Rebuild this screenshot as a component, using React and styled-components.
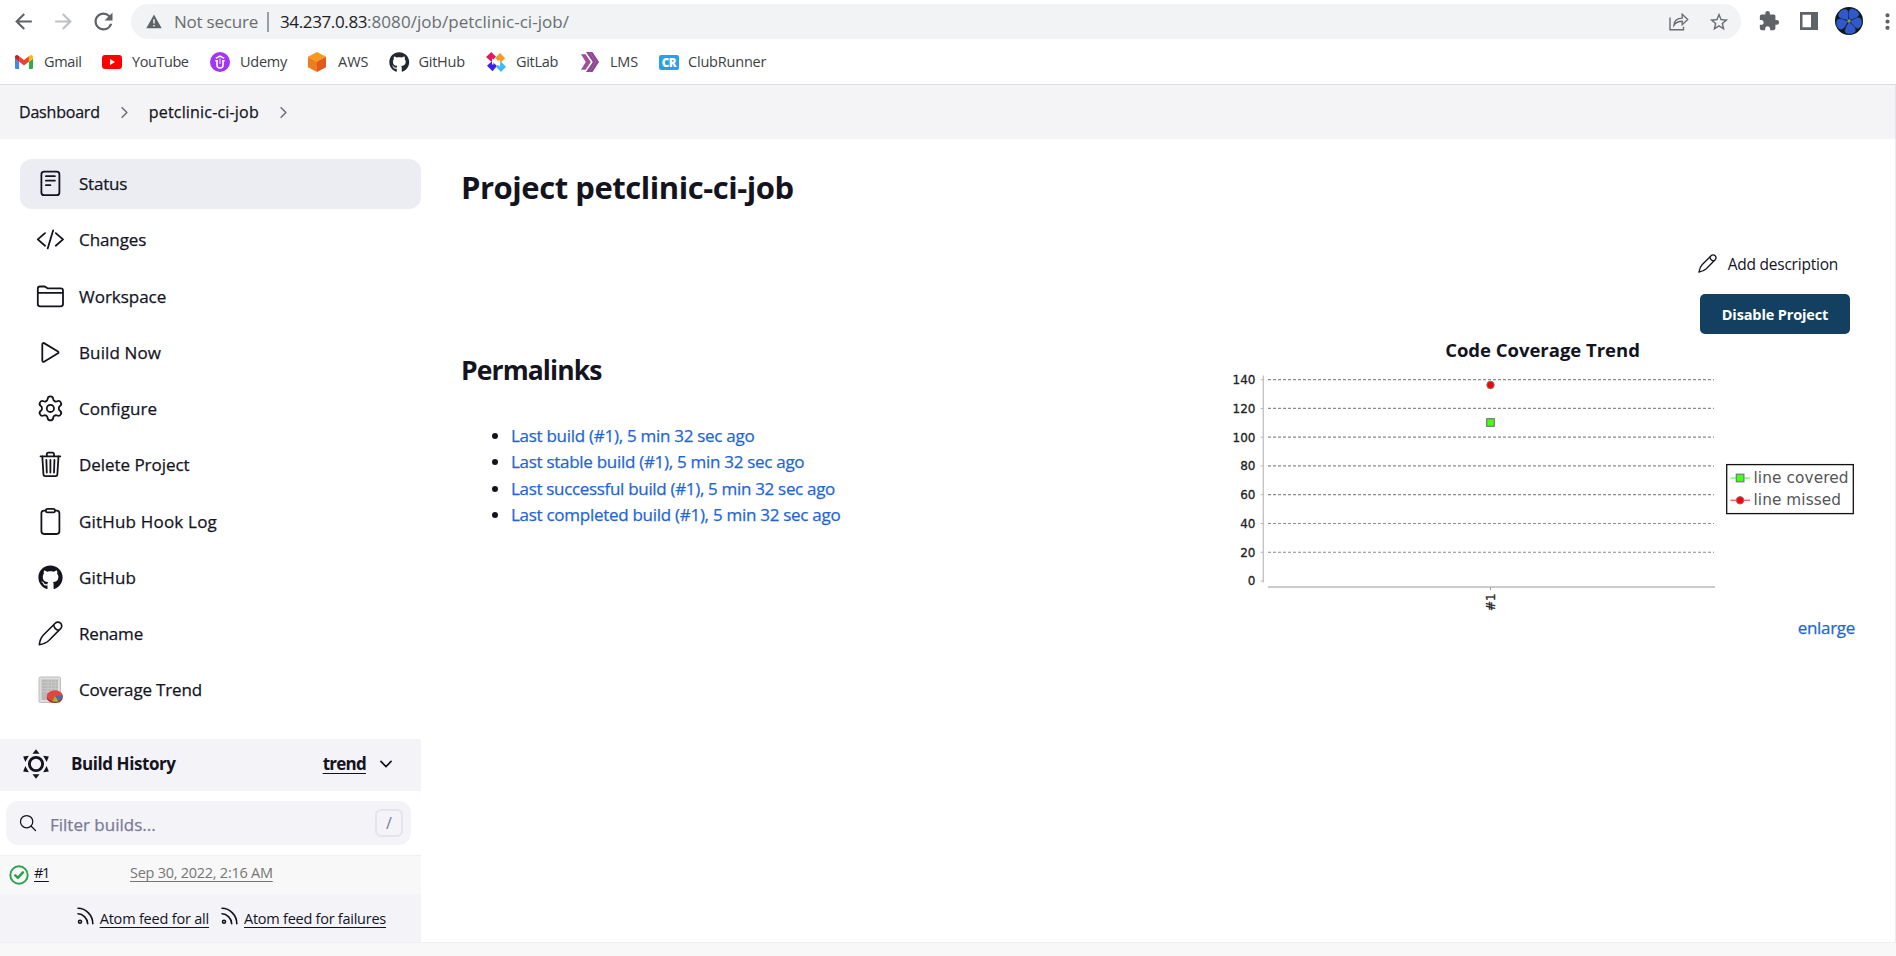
import React from 'react';
import styled, { createGlobalStyle } from 'styled-components';
import {
  IoReaderOutline, IoCodeSlashOutline, IoFolderOutline, IoPlayOutline,
  IoTrashOutline, IoClipboardOutline, IoSearchOutline, IoChevronDown, IoChevronForward,
} from 'react-icons/io5';
import { Settings } from 'lucide-react';
import { MdArrowBack, MdArrowForward, MdRefresh, MdStarBorder, MdExtension, MdMoreVert } from 'react-icons/md';
import { FaGithub } from 'react-icons/fa';

const Global = createGlobalStyle`
  * { box-sizing: border-box; }
  body { margin: 0; background: #fff; color: #14141f; font-family: "Open Sans", "Noto Sans", sans-serif; }
  svg { display: block; flex: none; }
`;

const Text = styled.span`
  letter-spacing: ${p => p.$ls || 0}px;
  white-space: nowrap;
`;
const MediumText = styled(Text)`-webkit-text-stroke: 0.25px currentColor;`;

const Page = styled.div`
  width: 1896px; height: 956px; overflow: hidden;
  display: flex; flex-direction: column;
`;

/* browser chrome */
const Toolbar = styled.div`
  height: 43px; padding: 0 0 1px 11px; flex: none;
  display: flex; align-items: center; color: #5f6368;
`;
const NavButtons = styled.div`
  display: flex; align-items: center; gap: 15px; margin-right: 13px; flex: none;
  svg:nth-child(2) { color: #bdc1c6; }
  svg:nth-child(3) { margin-left: -1px; margin-right: 1px; }
`;
const AddressBar = styled.div`
  width: 1610px; flex: none; height: 35px; margin-top: 1px; border-radius: 18px; background: #f1f3f4;
  display: flex; align-items: center; padding: 0 11px 0 15px;
  font-size: 17px; line-height: 24px; color: #6a6d72;
`;
const Security = styled.span`
  display: flex; align-items: center; gap: 12px; width: 121px;
`;
const Divider = styled.span`width: 2px; height: 20px; background: #9a9da1; margin-right: 11px;`;
const Host = styled(Text)`color: #202124;`;
const AddressActions = styled.span`margin-left: auto; display: flex; align-items: center; gap: 19px;`;
const BrowserActions = styled.div`
  display: flex; align-items: center; margin-left: 17px; flex: none;
  svg:nth-child(2) { margin: 0 17px 0 20px; }
  svg:nth-child(4) { margin-left: 12px; }
`;
const Bookmarks = styled.div`
  height: 42px; flex: none; border-bottom: 1px solid #dadce0;
  display: flex; align-items: center; padding: 0 0 3px 15px;
  font-size: 14.5px; line-height: 20px; color: #3c4043;
`;
const Bookmark = styled.span`
  display: flex; align-items: center; gap: ${p => p.$gap || 10}px; width: ${p => p.$w}px;
`;
const ClubBadge = styled.span`
  width: 20px; height: 15px; border-radius: 2px; background: #2ca0e6; color: #fff;
  font: 800 11.5px/15px "Open Sans", sans-serif; text-align: center; letter-spacing: -0.3px;
`;

/* breadcrumbs */
const Crumbs = styled.nav`
  height: 54px; flex: none; background: #f4f4f7; border-right: 1px solid #e6e6ea;
  display: flex; align-items: center; padding-left: 19px; font-size: 16px;
  svg { color: #6f6f7a; margin: 0 16px 0 16px; }
`;

const Body = styled.div`flex: 1; display: flex; border-right: 1px solid #ececec;`;

/* side panel */
const Side = styled.aside`width: 421px; flex: none; padding-top: 20px;`;
const Tasks = styled.div`
  display: flex; flex-direction: column; gap: 6.25px; padding-left: 20px; margin-bottom: 23.75px;
`;
const Task = styled.a`
  height: 50px; border-radius: 12px; padding: 0 0 1px 15px;
  display: flex; align-items: center; gap: 14px; font-size: 17px;
  background: ${p => (p.$active ? '#ecedf3' : 'transparent')};
`;
const TaskIcon = styled.span`
  width: 30px; height: 30px; display: flex; align-items: center; justify-content: center;
`;
const HistoryHead = styled.div`
  height: 52px; background: #f3f3f8; display: flex; align-items: center;
  padding: 0 26px 2px 22px; font-size: 17px; font-weight: 700;
  > span { padding-bottom: 1px; }
`;
const HistoryTitle = styled(Text)`margin-left: 21px; flex: 1;`;
const TrendLink = styled(Text)`text-decoration: underline; text-underline-offset: 3px; margin-right: 11px;`;
const Filter = styled.div`
  margin: 10px 10px 10px 6px; height: 44px; border-radius: 12px; background: #f3f3f8;
  display: flex; align-items: center; padding: 0 8px 0 12px;
  font-size: 17px; color: #7a7a99;
`;
const FilterHint = styled(MediumText)`flex: 1; margin: 2px 0 0 12px;`;
const SlashKey = styled.span`
  width: 28px; height: 28px; border: 2px solid #e4e3ee; border-radius: 6px;
  display: flex; align-items: center; justify-content: center; font-size: 16px;
`;
const BuildRow = styled.div`
  height: 39px; border-top: 1px solid #f0f0f2; background: #f8f8f8;
  display: flex; align-items: center; padding: 0 0 5px 9px; font-size: 14.5px;
  > svg { margin: 5px 5px 0 0; }
`;
const BuildNumber = styled.span`
  width: 96px; span { text-decoration: underline; text-underline-offset: 3px; }
`;
const BuildDate = styled(Text)`color: #767676; text-decoration: underline; text-underline-offset: 3px;`;
const Feeds = styled.div`
  height: 48px; background: #f3f3f8; display: flex; align-items: center; justify-content: flex-end;
  gap: 12px; padding: 0 35px 0 0; font-size: 14.5px;
`;
const Feed = styled.a`
  display: flex; align-items: center; gap: 6px;
  svg { margin-bottom: 5px; }
  span { text-decoration: underline; text-underline-offset: 3px; }
`;

/* main panel */
const Main = styled.main`flex: 1; padding: 28px 39px 0 40px;`;
const Title = styled.h1`margin: 0; font-size: 31px; line-height: 40px; font-weight: 700;`;
const Actions = styled.div`
  margin: 37px 6px 0 0; display: flex; flex-direction: column; align-items: flex-end; gap: 9px;
`;
const DescriptionLink = styled.a`
  height: 41px; padding: 0 12px 2px 0; display: flex; align-items: center; gap: 11px; font-size: 15.5px;
`;
const DisableButton = styled.button`
  width: 150px; height: 40px; border: 0; border-radius: 5px; background: #133f60; color: #fff;
  font: 700 14.5px "Open Sans", sans-serif; padding: 0;
`;
const Columns = styled.div`display: flex; justify-content: space-between; align-items: flex-start;`;
const Heading = styled.h2`margin: 18px 0 0; font-size: 26.5px; line-height: 36px; font-weight: 700;`;
const Links = styled.ul`
  margin: 35px 0 0; padding-left: 50px; font-size: 17px; line-height: 26.4px;
`;
const Link = styled(MediumText)`color: #1f65d6;`;
const Trend = styled.section`width: 625px; padding-top: 2px;`;
const TrendTitle = styled.div`
  font-size: 18.5px; line-height: 27px; margin-bottom: 1px; font-weight: 700; text-align: center; padding-right: 2px;
`;
const Enlarge = styled.div`text-align: right; padding-right: 1px; font-size: 17px; line-height: 27px;`;
const Footer = styled.footer`height: 14px; flex: none; background: #f8f8f8; border-top: 1px solid #efefef;`;

/* icons */
const Pencil = ({ size, sw }) => (
  <svg width={size} height={size} viewBox="0 0 26 26" fill="none" stroke="currentColor" strokeWidth={sw} strokeLinejoin="round">
    <path d="M1.3 24.7C2 20 3.2 17 5.6 14.6L17.9 2.3a3.9 3.9 0 0 1 5.6 0 3.9 3.9 0 0 1 0 5.6L11.3 20.3C8.9 22.6 6 24 1.3 24.7z" />
    <path d="M16.3 4c.4 2.8 2.6 5.2 5.5 5.6" />
  </svg>
);
const CoverageIcon = () => (
  <svg width="26" height="28" viewBox="0 0 26 28">
    <rect x="2" y="1" width="21.5" height="25.5" rx="1.5" fill="#dededc" stroke="#bcbcba" />
    <rect x="4.5" y="3.5" width="16.5" height="20.5" fill="#b9b9b7" />
    <path d="M11 3.5v20M4.5 6.5H21M4.5 9.5H21M4.5 12.5H21M4.5 15.5H21M14.5 3.5v20M18 3.5v20" stroke="#cdcdcb" strokeWidth=".7" />
    <ellipse cx="17.8" cy="21.2" rx="8" ry="5.9" fill="#a51d1d" />
    <ellipse cx="17.8" cy="20" rx="8" ry="5.7" fill="#e04540" />
    <path d="M17.8 20l7.8-.6c.3 2.3-1 4-3.5 4.9z" fill="#4c6cab" />
    <path d="M17.8 20l3.7 5.200c-2 .7-4.500.7-6 .1z" fill="#7fc42c" />
  </svg>
);
const WeatherGear = () => (
  <svg width="28" height="32" viewBox="-14 -16 28 32">
    <circle r="6.6" fill="none" stroke="currentColor" strokeWidth="2.9" />
    {[0, 60, 120, 180, 240, 300].map(a => (
      <path key={a} d="M0-14.8L3.5-10.3H-3.5z" fill="currentColor" transform={`rotate(${a})`} />
    ))}
  </svg>
);
const Success = () => (
  <svg width="20" height="20" viewBox="0 0 20 20" fill="none" stroke="#2aa24a">
    <circle cx="10" cy="10" r="8.7" strokeWidth="1.9" />
    <path d="M6.300 10.300l2.600 2.500 5-5.400" strokeWidth="2.500" strokeLinecap="round" strokeLinejoin="round" />
  </svg>
);
const Rss = () => (
  <svg width="17" height="18" viewBox="0 0 17 18" fill="none" stroke="currentColor" strokeWidth="1.600" strokeLinecap="round">
    <path d="M1 1.300c8 0 14.800 7 14.800 15.400M1 6.800c5 0 9.700 4.800 9.700 9.900" />
    <circle cx="3" cy="14.700" r="1.500" />
  </svg>
);
const Warning = () => (
  <svg width="16" height="15" viewBox="0 0 16 15">
    <path d="M8 .4L15.700 14.300H.3z" fill="#5f6368" />
    <path d="M8 5.200v4.300M8 10.900v1.700" stroke="#f1f3f4" strokeWidth="1.500" />
  </svg>
);
const Share = () => (
  <svg width="20" height="18" viewBox="0 0 20 18" fill="none" stroke="currentColor" strokeWidth="1.400">
    <path d="M1 4.500v12.300h13.500v-3" />
    <path d="M4.900 12.300C5.200 8 8.400 5.200 13.200 5.100V1.300L18.700 6.600 13.200 11.700V8.300C9.600 8.300 7 9.300 4.900 12.300z" />
  </svg>
);
const PanelIcon = () => (
  <svg width="18" height="18" viewBox="0 0 18 18"><path d="M0 0h18v18H0zM2.500 2.700v12.600H11V2.700z" fill="currentColor" fillRule="evenodd" /></svg>
);
const Avatar = () => (
  <svg width="28" height="28" viewBox="-14 -14 28 28">
    <circle r="14" fill="#0c1a12" />
    {[-38, 32, 102, 172, 250].map(a => (
      <path key={a} d="M0-1C-3-4-7-8-5-11.300-2.500-13.800 2.500-13.800 5-11.300 7-8 3-4 0-1z" fill="#3159c8" stroke="#14285e" strokeWidth=".5" transform={`rotate(${a})`} />
    ))}
    <circle r="1.700" fill="#8b9a4a" />
  </svg>
);
const Gmail = () => (
  <svg width="18" height="14" viewBox="52 42 88 66" preserveAspectRatio="none">
    <path fill="#4285f4" d="M58 108h14V74L52 59v43c0 3.320 2.690 6 6 6" />
    <path fill="#34a853" d="M120 108h14c3.320 0 6-2.690 6-6V59l-20 15" />
    <path fill="#fbbc04" d="M120 48v26l20-15v-8c0-7.420-8.470-11.650-14.400-7.200" />
    <path fill="#ea4335" d="M72 74V48l24 18 24-18v26L96 92" />
    <path fill="#c5221f" d="M52 51v8l20 15V48l-5.600-4.200c-5.940-4.450-14.400-.22-14.400 7.200" />
  </svg>
);
const YouTube = () => (
  <svg width="20" height="14" viewBox="0 0 20 14"><rect width="20" height="14" rx="3" fill="#f00" /><path d="M8 4l5 3-5 3z" fill="#fff" /></svg>
);
const Udemy = () => (
  <svg width="20" height="20" viewBox="0 0 20 20">
    <circle cx="10" cy="10" r="10" fill="#a435f0" />
    <path d="M5.800 6.400L10 4l4.200 2.400" fill="none" stroke="#fff" strokeWidth="1.500" />
    <path d="M7 8.800v4.200a3 3 0 0 0 6 0V8.800M5.300 8.800H8M12 8.800h2.700" fill="none" stroke="#fff" strokeWidth="1.600" />
    <path d="M10 6.500v5.500" stroke="#fff" strokeWidth="1" />
  </svg>
);
const Aws = () => (
  <svg width="20" height="20" viewBox="0 0 20 20">
    <path d="M10 0l9 4.800-9 4.700L1 4.800z" fill="#f8981d" />
    <path d="M1 4.800l9 4.700V20l-9-4.700z" fill="#f07c20" />
    <path d="M19 4.800l-9 4.700V20l9-4.700z" fill="#e05a1c" />
  </svg>
);
const GitLab = () => (
  <svg width="20" height="20" viewBox="0 0 20 20">
    <path d="M5.300 0L10 4.700 5.300 9.800 0 5z" fill="#e5195f" />
    <path d="M14 1l5.200 5.200L14 11 9.300 6z" fill="#f59a23" />
    <path d="M6 9.300l4.900 4.700L6.500 19.300 1 13.700z" fill="#3a20e8" />
    <path d="M15 9.800l5 5L15 20l-5-5.200z" fill="#3cb9ff" />
    <path d="M6.800 12.500V8l6.500 5V8.300" fill="none" stroke="#fff" strokeWidth="1.500" />
  </svg>
);
const Lms = () => (
  <svg width="18" height="20" viewBox="0 0 18 20">
    <path d="M5 0h6.500L18 10l-6.500 10H5l6.800-10z" fill="#8a4593" />
    <path d="M0 2.300h4.500L9.800 10 4.500 17.700H0L4.800 10z" fill="#a04f92" />
    <path d="M8.500 0l6.300 10-6.300 10" fill="none" stroke="#c06aa0" strokeWidth=".7" />
  </svg>
);

const io = { size: 28.8 };
const tasks = [
  ['Status', -0.23, <IoReaderOutline {...io} />],
  ['Changes', -0.08, <IoCodeSlashOutline {...io} />],
  ['Workspace', -0.02, <IoFolderOutline {...io} />],
  ['Build Now', 0.12, <IoPlayOutline {...io} />],
  ['Configure', 0.06, <Settings size={28.8} strokeWidth={1.5} />],
  ['Delete Project', -0.05, <IoTrashOutline {...io} />],
  ['GitHub Hook Log', 0.19, <IoClipboardOutline {...io} />],
  ['GitHub', 0.16, <FaGithub size={25} />],
  ['Rename', -0.2, <Pencil size={25} sw={1.7} />],
  ['Coverage Trend', -0.16, <CoverageIcon />],
];

const bookmarks = [
  ['Gmail', -0.36, 87, <Gmail />, 11],
  ['YouTube', -0.44, 108, <YouTube />],
  ['Udemy', -0.25, 97, <Udemy />],
  ['AWS', 0, 82, <Aws />, 11],
  ['GitHub', -0.25, 97, <FaGithub size={20.5} color="#24292f" />, 9],
  ['GitLab', -0.3, 95, <GitLab />],
  ['LMS', -0.2, 78, <Lms />, 11],
  ['ClubRunner', -0.2, 120, <ClubBadge>CR</ClubBadge>, 9],
];

const permalinks = [
  ['Last build (#1), 5 min 32 sec ago', -0.28],
  ['Last stable build (#1), 5 min 32 sec ago', -0.29],
  ['Last successful build (#1), 5 min 32 sec ago', -0.32],
  ['Last completed build (#1), 5 min 32 sec ago', -0.28],
];

const ChartSvg = styled.svg`
  font-family: "DejaVu Sans", sans-serif;
  .tick { font-size: 12px; fill: #222; stroke: #222; stroke-width: 0.3px; }
  .legend { font-size: 15.3px; fill: #555; }
`;

function CoverageChart() {
  const ticks = [140, 120, 100, 80, 60, 40, 20, 0];
  const y = v => 217 - v * 1.438;
  return (
    <ChartSvg width="625" height="250" viewBox="0 0 625 250">
      <path d="M32.300 11.500v207" stroke="#bbb" strokeWidth="1.200" />
      {ticks.map(v => (
        <g key={v}>
          <path d={`M29.500 ${y(v)}h3`} stroke="#bbb" />
          {v > 0 && <path d={`M37 ${y(v)}H483`} stroke="#8c8c8c" strokeWidth="1.200" strokeDasharray="3 2" />}
          <text className="tick" x="24.500" y={y(v) + 4.300} textAnchor="end">{v}</text>
        </g>
      ))}
      <path d="M37 223H484" stroke="#bbb" strokeWidth="1.300" />
      <path d="M259.500 223v3" stroke="#999" />
      <text className="tick" transform="translate(264 247) rotate(-90)">#1</text>
      <circle cx="259.500" cy="21" r="3.700" fill="#f00" stroke="#777" />
      <rect x="255.700" y="54.700" width="7.600" height="7.600" fill="#4f1" stroke="#777" strokeWidth="1.200" />
      <rect x="495.700" y="100.600" width="126.600" height="49" fill="#fff" stroke="#111" strokeWidth="1.300" />
      <path d="M499.500 114h19.500" stroke="#7f7" strokeWidth="1.500" />
      <rect x="505.300" y="110.200" width="7.600" height="7.600" fill="#4f1" stroke="#777" strokeWidth="1.200" />
      <path d="M499.500 136.300h19.500" stroke="#f66" strokeWidth="1.500" />
      <circle cx="509.100" cy="136.300" r="3.700" fill="#f00" stroke="#777" />
      <text className="legend" x="522.500" y="119" textLength="95">line covered</text>
      <text className="legend" x="522.500" y="141.300" textLength="87.500">line missed</text>
    </ChartSvg>
  );
}

export default function App() {
  return (
    <Page>
      <Global />
      <Toolbar>
        <NavButtons>
          <MdArrowBack size={25} /><MdArrowForward size={25} /><MdRefresh size={27} />
        </NavButtons>
        <AddressBar>
          <Security><Warning /><Text $ls={-0.22}>Not secure</Text></Security>
          <Divider />
          <Host $ls={-0.37}>34.237.0.83</Host><Text $ls={0.04}>:8080/job/petclinic-ci-job/</Text>
          <AddressActions><Share /><MdStarBorder size={22} /></AddressActions>
        </AddressBar>
        <BrowserActions>
          <MdExtension size={22} /><PanelIcon /><Avatar /><MdMoreVert size={25} />
        </BrowserActions>
      </Toolbar>
      <Bookmarks>
        {bookmarks.map(([label, ls, w, icon, gap]) => (
          <Bookmark key={label} $w={w} $gap={gap}>{icon}<Text $ls={ls}>{label}</Text></Bookmark>
        ))}
      </Bookmarks>
      <Crumbs>
        <MediumText $ls={-0.2}>Dashboard</MediumText><IoChevronForward size={17} />
        <MediumText $ls={0.18}>petclinic-ci-job</MediumText><IoChevronForward size={17} />
      </Crumbs>
      <Body>
        <Side>
          <Tasks>
            {tasks.map(([label, ls, icon], i) => (
              <Task key={label} $active={i === 0}>
                <TaskIcon>{icon}</TaskIcon><MediumText $ls={ls}>{label}</MediumText>
              </Task>
            ))}
          </Tasks>
          <HistoryHead>
            <WeatherGear />
            <HistoryTitle $ls={-0.42}>Build History</HistoryTitle>
            <TrendLink $ls={-0.75}>trend</TrendLink>
            <IoChevronDown size={18} />
          </HistoryHead>
          <Filter>
            <IoSearchOutline size={20} color="#14141f" />
            <FilterHint>Filter builds...</FilterHint>
            <SlashKey>/</SlashKey>
          </Filter>
          <BuildRow>
            <Success />
            <BuildNumber><Text $ls={-1.4}>#1</Text></BuildNumber>
            <BuildDate $ls={-0.26}>Sep 30, 2022, 2:16 AM</BuildDate>
          </BuildRow>
          <Feeds>
            <Feed><Rss /><Text $ls={-0.2}>Atom feed for all</Text></Feed>
            <Feed><Rss /><Text $ls={-0.25}>Atom feed for failures</Text></Feed>
          </Feeds>
        </Side>
        <Main>
          <Title><Text $ls={-0.46}>Project petclinic-ci-job</Text></Title>
          <Actions>
            <DescriptionLink><Pencil size={19} sw={1.8} /><Text $ls={-0.23}>Add description</Text></DescriptionLink>
            <DisableButton><Text $ls={-0.13}>Disable Project</Text></DisableButton>
          </Actions>
          <Columns>
            <div>
              <Heading><Text $ls={-0.9}>Permalinks</Text></Heading>
              <Links>
                {permalinks.map(([label, ls]) => <li key={label}><Link $ls={ls}>{label}</Link></li>)}
              </Links>
            </div>
            <Trend>
              <TrendTitle><Text $ls={-0.02}>Code Coverage Trend</Text></TrendTitle>
              <CoverageChart />
              <Enlarge><Link $ls={-0.3}>enlarge</Link></Enlarge>
            </Trend>
          </Columns>
        </Main>
      </Body>
      <Footer />
    </Page>
  );
}
